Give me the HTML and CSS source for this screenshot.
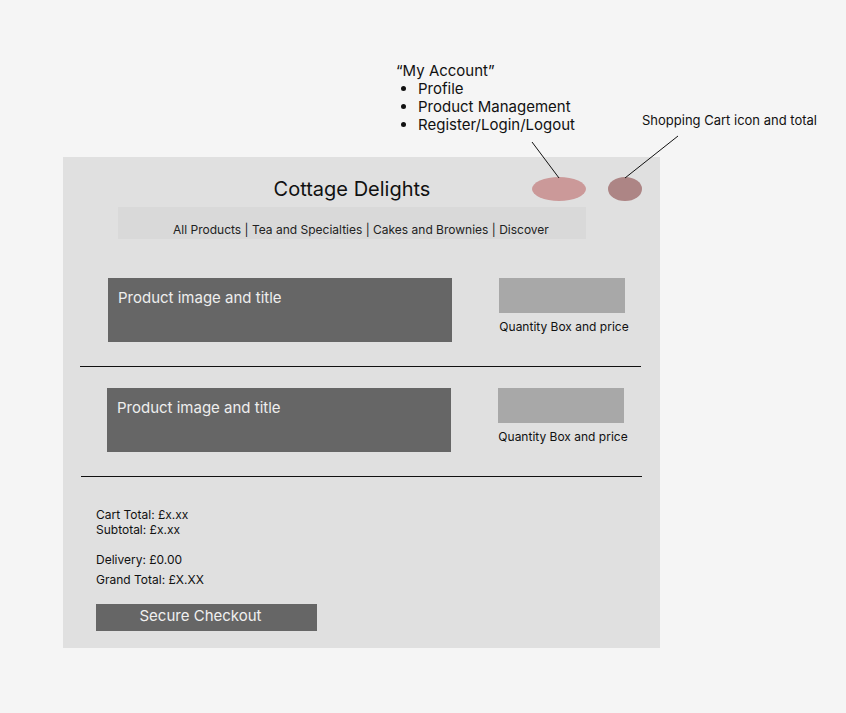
FILE: index.html
```html
<!DOCTYPE html>
<html lang="en">
<head>
    <meta charset="UTF-8">
    <meta name="viewport" content="width=device-width, initial-scale=1.0">
    <title>Cottage Delights - Cart Wireframe</title>
    <link rel="stylesheet" href="styles.css">
</head>
<body>

<div class="canvas">

    <!-- Annotations -->
    <div class="note account-note">
        <div>&ldquo;My Account&rdquo;</div>
        <ul>
            <li>Profile</li>
            <li>Product Management</li>
            <li>Register/Login/Logout</li>
        </ul>
    </div>
    <div class="note cart-note">Shopping Cart icon and total</div>
    <svg class="pointers" width="846" height="713">
        <line x1="532" y1="142" x2="559" y2="178" stroke="#111" stroke-width="1"/>
        <line x1="678" y1="136" x2="625" y2="178" stroke="#111" stroke-width="1"/>
    </svg>

    <div class="panel">
        <div class="header">
            <h1 class="title">Cottage Delights</h1>
            <div class="nav">All Products | Tea and Specialties | Cakes and Brownies | Discover</div>
            <span class="account-btn"></span>
            <span class="cart-btn"></span>
        </div>

        <div class="product">
            <div class="product-image">Product image and title</div>
            <div class="quantity">
                <div class="quantity-box"></div>
                <div class="quantity-label">Quantity Box and price</div>
            </div>
        </div>
        <hr class="divider">

        <div class="product shift">
            <div class="product-image">Product image and title</div>
            <div class="quantity">
                <div class="quantity-box"></div>
                <div class="quantity-label">Quantity Box and price</div>
            </div>
        </div>
        <hr class="divider second">

        <div class="totals">
            <div>Cart Total: &pound;x.xx</div>
            <div>Subtotal: &pound;x.xx</div>
            <div class="delivery">Delivery: &pound;0.00</div>
            <div class="grand">Grand Total: &pound;X.XX</div>
        </div>

        <button class="checkout">Secure Checkout</button>
    </div>

</div>

</body>
</html>
```

FILE: styles.css
```css
body {
    margin: 0;
    background-color: #f5f5f5;
    font-family: Inter, "Noto Sans", sans-serif;
    color: #111;
}
.canvas {
    position: relative;
    width: 846px;
    height: 713px;
    padding: 157px 0 0 63px;
    box-sizing: border-box;
}

/* annotations */
.note {
    position: absolute;
    color: #111;
}
.account-note {
    left: 396px;
    top: 62px;
    font-size: 15px;
    line-height: 18px;
}
.account-note ul {
    margin: 0;
    padding-left: 22px;
}
.cart-note {
    left: 642px;
    top: 112px;
    font-size: 13px;
    line-height: 16px;
}
.pointers {
    position: absolute;
    left: 0;
    top: 0;
    z-index: 2;
}

/* wireframe panel */
.panel {
    width: 597px;
    height: 491px;
    background-color: #e0e0e0;
    box-sizing: border-box;
    padding-top: 20px;
}
.header {
    position: relative;
    margin-left: 55px;
    width: 468px;
}
.title {
    margin: 0;
    font-size: 20px;
    font-weight: normal;
    line-height: 24px;
    text-align: center;
    color: #111;
}
.nav {
    margin-top: 6px;
    height: 32px;
    box-sizing: border-box;
    padding: 15px 0 0 18px;
    background-color: #d9d9d9;
    font-size: 12px;
    line-height: 16px;
    text-align: center;
    color: #222;
}
.account-btn,
.cart-btn {
    position: absolute;
    top: 0;
    height: 24px;
    border-radius: 50%;
}
.account-btn {
    left: 414px;
    width: 54px;
    background-color: #cb9999;
}
.cart-btn {
    left: 490px;
    width: 34px;
    background-color: #ad8585;
}

/* products */
.product {
    display: flex;
    align-items: flex-start;
    margin-top: 39px;
    margin-left: 45px;
}
.product.shift {
    margin-top: 21px;
    margin-left: 44px;
}
.product-image {
    width: 344px;
    height: 64px;
    box-sizing: border-box;
    padding: 10px 10px;
    background-color: #666;
    color: #eee;
    font-size: 15px;
    line-height: 19px;
}
.quantity {
    margin-left: 47px;
    width: 126px;
}
.quantity-box {
    height: 35px;
    background-color: #a8a8a8;
}
.quantity-label {
    margin: 6px -10px 0 -6px;
    font-size: 12px;
    line-height: 15px;
    text-align: center;
    white-space: nowrap;
    color: #111;
}
.divider {
    margin: 24px 0 0 17px;
    width: 561px;
    border: none;
    border-top: 1px solid #111;
}
.divider.second {
    margin-left: 18px;
}

/* totals */
.totals {
    margin: 30px 0 0 33px;
    font-size: 12px;
    line-height: 15px;
    color: #111;
}
.delivery {
    margin-top: 15px;
}
.grand {
    margin-top: 5px;
}
.checkout {
    display: block;
    margin: 17px 0 0 33px;
    width: 221px;
    height: 27px;
    padding: 0 12px 4px 0;
    border: none;
    background-color: #666;
    color: #f0f0f0;
    font-family: Inter, "Noto Sans", sans-serif;
    font-size: 15px;
    line-height: 23px;
    text-align: center;
}
```
